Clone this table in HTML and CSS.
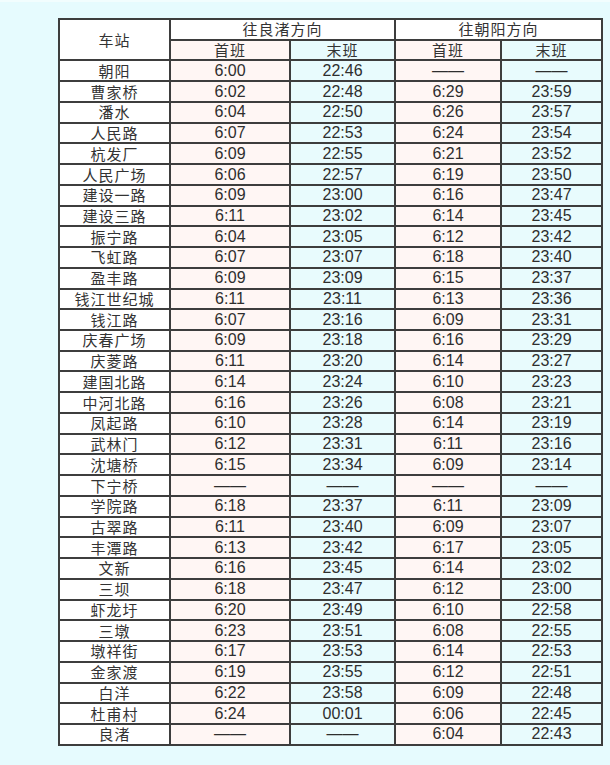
FILE: index.html
```html
<!DOCTYPE html>
<html lang="zh-CN">
<head>
<meta charset="utf-8">
<title>地铁首末班车时刻表</title>
<link rel="stylesheet" href="styles.css">
</head>
<body>
<div class="topline"></div>
<div class="wrap">
<table class="tt">
<colgroup>
<col class="c-st"><col class="c-a1"><col class="c-a2"><col class="c-b1"><col class="c-b2">
</colgroup>
<thead>
<tr><th rowspan="2" class="st">车站</th><th colspan="2" class="dir">往良渚方向</th><th colspan="2" class="dir">往朝阳方向</th></tr>
<tr><th class="first">首班</th><th class="last">末班</th><th class="first">首班</th><th class="last">末班</th></tr>
</thead>
<tbody>
<tr><td class="st">朝阳</td><td class="first">6:00</td><td class="last">22:46</td><td class="first">——</td><td class="last">——</td></tr>
<tr><td class="st">曹家桥</td><td class="first">6:02</td><td class="last">22:48</td><td class="first">6:29</td><td class="last">23:59</td></tr>
<tr><td class="st">潘水</td><td class="first">6:04</td><td class="last">22:50</td><td class="first">6:26</td><td class="last">23:57</td></tr>
<tr><td class="st">人民路</td><td class="first">6:07</td><td class="last">22:53</td><td class="first">6:24</td><td class="last">23:54</td></tr>
<tr><td class="st">杭发厂</td><td class="first">6:09</td><td class="last">22:55</td><td class="first">6:21</td><td class="last">23:52</td></tr>
<tr><td class="st">人民广场</td><td class="first">6:06</td><td class="last">22:57</td><td class="first">6:19</td><td class="last">23:50</td></tr>
<tr><td class="st">建设一路</td><td class="first">6:09</td><td class="last">23:00</td><td class="first">6:16</td><td class="last">23:47</td></tr>
<tr><td class="st">建设三路</td><td class="first">6:11</td><td class="last">23:02</td><td class="first">6:14</td><td class="last">23:45</td></tr>
<tr><td class="st">振宁路</td><td class="first">6:04</td><td class="last">23:05</td><td class="first">6:12</td><td class="last">23:42</td></tr>
<tr><td class="st">飞虹路</td><td class="first">6:07</td><td class="last">23:07</td><td class="first">6:18</td><td class="last">23:40</td></tr>
<tr><td class="st">盈丰路</td><td class="first">6:09</td><td class="last">23:09</td><td class="first">6:15</td><td class="last">23:37</td></tr>
<tr><td class="st">钱江世纪城</td><td class="first">6:11</td><td class="last">23:11</td><td class="first">6:13</td><td class="last">23:36</td></tr>
<tr><td class="st">钱江路</td><td class="first">6:07</td><td class="last">23:16</td><td class="first">6:09</td><td class="last">23:31</td></tr>
<tr><td class="st">庆春广场</td><td class="first">6:09</td><td class="last">23:18</td><td class="first">6:16</td><td class="last">23:29</td></tr>
<tr><td class="st">庆菱路</td><td class="first">6:11</td><td class="last">23:20</td><td class="first">6:14</td><td class="last">23:27</td></tr>
<tr><td class="st">建国北路</td><td class="first">6:14</td><td class="last">23:24</td><td class="first">6:10</td><td class="last">23:23</td></tr>
<tr><td class="st">中河北路</td><td class="first">6:16</td><td class="last">23:26</td><td class="first">6:08</td><td class="last">23:21</td></tr>
<tr><td class="st">凤起路</td><td class="first">6:10</td><td class="last">23:28</td><td class="first">6:14</td><td class="last">23:19</td></tr>
<tr><td class="st">武林门</td><td class="first">6:12</td><td class="last">23:31</td><td class="first">6:11</td><td class="last">23:16</td></tr>
<tr><td class="st">沈塘桥</td><td class="first">6:15</td><td class="last">23:34</td><td class="first">6:09</td><td class="last">23:14</td></tr>
<tr><td class="st">下宁桥</td><td class="first">——</td><td class="last">——</td><td class="first">——</td><td class="last">——</td></tr>
<tr><td class="st">学院路</td><td class="first">6:18</td><td class="last">23:37</td><td class="first">6:11</td><td class="last">23:09</td></tr>
<tr><td class="st">古翠路</td><td class="first">6:11</td><td class="last">23:40</td><td class="first">6:09</td><td class="last">23:07</td></tr>
<tr><td class="st">丰潭路</td><td class="first">6:13</td><td class="last">23:42</td><td class="first">6:17</td><td class="last">23:05</td></tr>
<tr><td class="st">文新</td><td class="first">6:16</td><td class="last">23:45</td><td class="first">6:14</td><td class="last">23:02</td></tr>
<tr><td class="st">三坝</td><td class="first">6:18</td><td class="last">23:47</td><td class="first">6:12</td><td class="last">23:00</td></tr>
<tr><td class="st">虾龙圩</td><td class="first">6:20</td><td class="last">23:49</td><td class="first">6:10</td><td class="last">22:58</td></tr>
<tr><td class="st">三墩</td><td class="first">6:23</td><td class="last">23:51</td><td class="first">6:08</td><td class="last">22:55</td></tr>
<tr><td class="st">墩祥街</td><td class="first">6:17</td><td class="last">23:53</td><td class="first">6:14</td><td class="last">22:53</td></tr>
<tr><td class="st">金家渡</td><td class="first">6:19</td><td class="last">23:55</td><td class="first">6:12</td><td class="last">22:51</td></tr>
<tr><td class="st">白洋</td><td class="first">6:22</td><td class="last">23:58</td><td class="first">6:09</td><td class="last">22:48</td></tr>
<tr><td class="st">杜甫村</td><td class="first">6:24</td><td class="last">00:01</td><td class="first">6:06</td><td class="last">22:45</td></tr>
<tr><td class="st">良渚</td><td class="first">——</td><td class="last">——</td><td class="first">6:04</td><td class="last">22:43</td></tr>
</tbody>
</table>
</div>
</body>
</html>
```
FILE: styles.css
```css
html, body {
  margin: 0;
  padding: 0;
  background: #e6fbfe;
}
body {
  width: 610px;
  height: 765px;
  overflow: hidden;
}
.topline {
  height: 2px;
  background: #f2fdfe;
}
.wrap {
  padding: 16px 0 0 58px;
}
.tt {
  border-collapse: collapse;
  table-layout: fixed;
  width: 543px;
  font-family: "Liberation Sans", Arial, "Noto Sans CJK SC", sans-serif;
  font-size: 16px;
  color: #2e2e2e;
  border: 2px solid #333;
}
.c-st { width: 111px; }
.c-a1 { width: 120px; }
.c-a2 { width: 105px; }
.c-b1 { width: 106px; }
.c-b2 { width: 101px; }
.tt tr {
  height: 20.74px;
}
.tt th, .tt td {
  border: 2px solid #3d3d3d;
  padding: 0;
  text-align: center;
  vertical-align: middle;
  line-height: 16px;
  font-weight: normal;
  white-space: nowrap;
}
.tt th,
.tt td.st {
  font-family: "Noto Sans CJK SC", sans-serif;
  font-size: 15px;
  letter-spacing: 1px;
  font-weight: 400;
  color: #333;
}
.st, .dir { background: #ffffff; }
.first { background: #fff6f4; }
.last { background: #e8fbfd; }
```
